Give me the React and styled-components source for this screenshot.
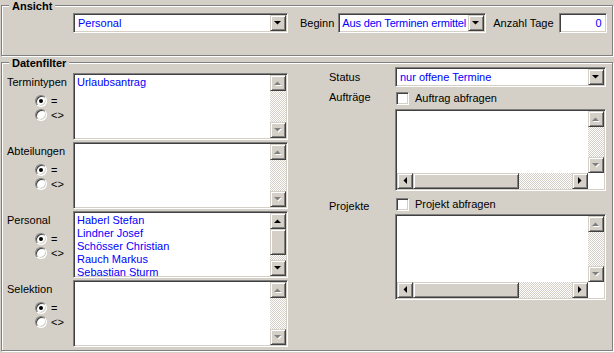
import React from "react";
import styled, { createGlobalStyle } from "styled-components";

const GlobalStyle = createGlobalStyle`
  html, body {
    margin: 0;
    padding: 0;
    background: #d4d0c8;
  }
  body {
    font-family: "Liberation Sans", Arial, sans-serif;
    font-size: 11px;
    color: #000;
  }
`;

const Window = styled.div`
  width: 614px;
  height: 353px;
  box-sizing: border-box;
  padding: 5px 1px 0 1px;
  background: #d4d0c8;
  display: flex;
  flex-direction: column;
  gap: 6px;
  overflow: hidden;
`;

const Group = styled.section`
  position: relative;
  box-sizing: border-box;
  height: ${(p) => p.$h}px;
  border: 1px solid #808080;
  box-shadow: inset 1px 1px 0 #fff, 1px 1px 0 #fff;
`;

const GroupTitle = styled.div`
  position: absolute;
  top: -6px;
  left: 7px;
  padding: 0 3px;
  background: #d4d0c8;
  font-weight: bold;
  line-height: 13px;
`;

const TopRow = styled.div`
  display: flex;
  align-items: center;
  padding: 7px 0 0 71px;
`;

const Label = styled.span`
  margin-left: ${(p) => p.$ml || 0}px;
  margin-right: ${(p) => p.$mr || 0}px;
  line-height: 13px;
  white-space: nowrap;
`;

const sunken = `
  box-sizing: border-box;
  border: 1px solid;
  border-color: #808080 #fff #fff #808080;
  box-shadow: inset 1px 1px 0 #404040, inset -1px -1px 0 #d4d0c8;
  background: #fff;
`;

const raised = `
  box-sizing: border-box;
  background: #d4d0c8;
  border: 1px solid;
  border-color: #d4d0c8 #404040 #404040 #d4d0c8;
  box-shadow: inset 1px 1px 0 #fff, inset -1px -1px 0 #808080;
`;

const Combo = styled.div`
  ${sunken}
  width: ${(p) => p.$w}px;
  height: 20px;
  padding: 1px;
  display: flex;
  align-items: stretch;
`;

const ComboText = styled.div`
  flex: 1;
  min-width: 0;
  padding-left: ${(p) => (p.$tight ? 2 : 3)}px;
  letter-spacing: ${(p) => (p.$tight ? "-0.15px" : "normal")};
  color: #0000ff;
  line-height: 16px;
  white-space: nowrap;
  overflow: hidden;
`;

const DropButton = styled.div`
  ${raised}
  width: 16px;
  height: 16px;
  flex: none;
  display: flex;
  align-items: center;
  justify-content: center;
`;

const NumberField = styled.div`
  ${sunken}
  width: ${(p) => p.$w}px;
  height: 20px;
  padding-right: 4px;
  color: #0000ff;
  text-align: right;
  line-height: 18px;
`;

const FilterBody = styled.div`
  display: flex;
  align-items: flex-start;
`;

const LeftColumn = styled.div`
  display: flex;
  flex-direction: column;
  gap: 2px;
  padding-top: 10px;
`;

const FilterRow = styled.div`
  display: flex;
`;

const FilterSide = styled.div`
  width: 71px;
  padding-top: 3px;
  display: flex;
  flex-direction: column;
`;

const SideLabel = styled.div`
  padding-left: 5px;
  line-height: 13px;
`;

const RadioList = styled.div`
  margin-top: 5px;
  padding-left: 33px;
  display: flex;
  flex-direction: column;
`;

const RadioRow = styled.div`
  height: 14px;
  display: flex;
  align-items: center;
  gap: 4px;
`;

const RadioDot = styled.span`
  width: 12px;
  height: 12px;
  box-sizing: border-box;
  border-radius: 50%;
  background: #fff;
  border: 1px solid;
  border-color: #808080 #fff #fff #808080;
  box-shadow: inset 1px 1px 0 #404040, inset -1px -1px 0 #d4d0c8;
  display: flex;
  align-items: center;
  justify-content: center;
  &::after {
    content: "";
    width: 4px;
    height: 4px;
    border-radius: 50%;
    background: ${(p) => (p.$checked ? "#000" : "transparent")};
  }
`;

const ListBox = styled.div`
  ${sunken}
  width: ${(p) => p.$w}px;
  height: ${(p) => p.$h}px;
  padding: 1px;
  display: grid;
  grid-template-columns: 1fr 16px;
  grid-template-rows: ${(p) => (p.$hscroll ? "1fr 16px" : "1fr")};
`;

const Items = styled.div`
  padding: 1px 0 0 2px;
  overflow: hidden;
  color: #0000ff;
  line-height: 13px;
  white-space: nowrap;
`;

const VScroll = styled.div`
  display: flex;
  flex-direction: column;
`;

const HScroll = styled.div`
  display: flex;
`;

const Corner = styled.div`
  background: #fff;
`;

const ArrowButton = styled.div`
  ${raised}
  width: 16px;
  height: 16px;
  flex: none;
  display: flex;
  align-items: center;
  justify-content: center;
`;

const Thumb = styled.div`
  ${raised}
  flex: none;
  width: ${(p) => (p.$horizontal ? `${p.$size}px` : "16px")};
  height: ${(p) => (p.$horizontal ? "16px" : `${p.$size}px`)};
`;

const Track = styled.div`
  flex: 1;
  background: repeating-conic-gradient(#fff 0 25%, #d4d0c8 0 50%) 0 0 / 2px 2px;
`;

const RightColumn = styled.div`
  margin-left: 41px;
  padding-top: 4px;
  display: flex;
  flex-direction: column;
`;

const FieldRow = styled.div`
  display: flex;
  margin-top: ${(p) => p.$mt || 0}px;
`;

const FieldLabel = styled.div`
  width: 66px;
  line-height: 13px;
  padding-top: ${(p) => p.$pt || 0}px;
`;

const FieldControl = styled.div`
  display: flex;
  flex-direction: column;
  gap: ${(p) => p.$gap || 0}px;
`;

const CheckRow = styled.div`
  height: 14px;
  display: flex;
  align-items: center;
  gap: 6px;
  padding-left: 1px;
`;

const CheckBox = styled.span`
  ${sunken}
  width: 13px;
  height: 13px;
`;

const Arrow = ({ dir = "down", disabled }) => {
  const pts = {
    up: "0,4 7,4 3.5,0.5",
    down: "0,0 7,0 3.5,3.5",
    left: "4,0 4,7 0.5,3.5",
    right: "0,0 0,7 3.5,3.5",
  }[dir];
  const vertical = dir === "up" || dir === "down";
  const w = vertical ? 7 : 4;
  const h = vertical ? 4 : 7;
  return (
    <svg width={w + 1} height={h + 1} viewBox={`0 0 ${w + 1} ${h + 1}`}>
      {disabled && <polygon points={pts} fill="#fff" transform="translate(1 1)" />}
      <polygon points={pts} fill={disabled ? "#808080" : "#000"} />
    </svg>
  );
};

const Select = ({ w, value, tight }) => (
  <Combo $w={w}>
    <ComboText $tight={tight}>{value}</ComboText>
    <DropButton>
      <Arrow dir="down" />
    </DropButton>
  </Combo>
);

const Radios = () => (
  <RadioList>
    <RadioRow>
      <RadioDot $checked />
      <span>=</span>
    </RadioRow>
    <RadioRow>
      <RadioDot />
      <span>&lt;&gt;</span>
    </RadioRow>
  </RadioList>
);

const List = ({ w, h, items = [], thumb, hscroll }) => (
  <ListBox $w={w} $h={h} $hscroll={hscroll}>
    <Items>
      {items.map((it) => (
        <div key={it}>{it}</div>
      ))}
    </Items>
    <VScroll>
      <ArrowButton>
        <Arrow dir="up" disabled={!thumb} />
      </ArrowButton>
      {thumb && <Thumb $size={thumb} />}
      <Track />
      <ArrowButton>
        <Arrow dir="down" disabled={!thumb} />
      </ArrowButton>
    </VScroll>
    {hscroll && (
      <>
        <HScroll>
          <ArrowButton>
            <Arrow dir="left" />
          </ArrowButton>
          <Thumb $horizontal $size={106} />
          <Track />
          <ArrowButton>
            <Arrow dir="right" />
          </ArrowButton>
        </HScroll>
        <Corner />
      </>
    )}
  </ListBox>
);

const filters = [
  { label: "Termintypen", items: ["Urlaubsantrag"] },
  { label: "Abteilungen", items: [] },
  {
    label: "Personal",
    items: ["Haberl Stefan", "Lindner Josef", "Schösser Christian", "Rauch Markus", "Sebastian Sturm"],
    thumb: 26,
  },
  { label: "Selektion", items: [] },
];

export default function App() {
  return (
    <>
      <GlobalStyle />
      <Window>
        <Group $h={51}>
          <GroupTitle>Ansicht</GroupTitle>
          <TopRow>
            <Select w={215} value="Personal" />
            <Label $ml={12} $mr={4}>
              Beginn
            </Label>
            <Select w={148} value="Aus den Terminen ermittel" tight />
            <Label $ml={7} $mr={5}>
              Anzahl Tage
            </Label>
            <NumberField $w={48}>0</NumberField>
          </TopRow>
        </Group>

        <Group $h={289}>
          <GroupTitle>Datenfilter</GroupTitle>
          <FilterBody>
            <LeftColumn>
              {filters.map((f) => (
                <FilterRow key={f.label}>
                  <FilterSide>
                    <SideLabel>{f.label}</SideLabel>
                    <Radios />
                  </FilterSide>
                  <List w={215} h={67} items={f.items} thumb={f.thumb} />
                </FilterRow>
              ))}
            </LeftColumn>

            <RightColumn>
              <FieldRow>
                <FieldLabel $pt={4}>Status</FieldLabel>
                <Select w={211} value="nur offene Termine" />
              </FieldRow>
              <FieldRow $mt={4}>
                <FieldLabel $pt={0}>Aufträge</FieldLabel>
                <FieldControl $gap={4}>
                  <CheckRow>
                    <CheckBox />
                    <span>Auftrag abfragen</span>
                  </CheckRow>
                  <List w={211} h={82} hscroll />
                </FieldControl>
              </FieldRow>
              <FieldRow $mt={6}>
                <FieldLabel $pt={3}>Projekte</FieldLabel>
                <FieldControl $gap={3}>
                  <CheckRow>
                    <CheckBox />
                    <span>Projekt abfragen</span>
                  </CheckRow>
                  <List w={211} h={86} hscroll />
                </FieldControl>
              </FieldRow>
            </RightColumn>
          </FilterBody>
        </Group>
      </Window>
    </>
  );
}
